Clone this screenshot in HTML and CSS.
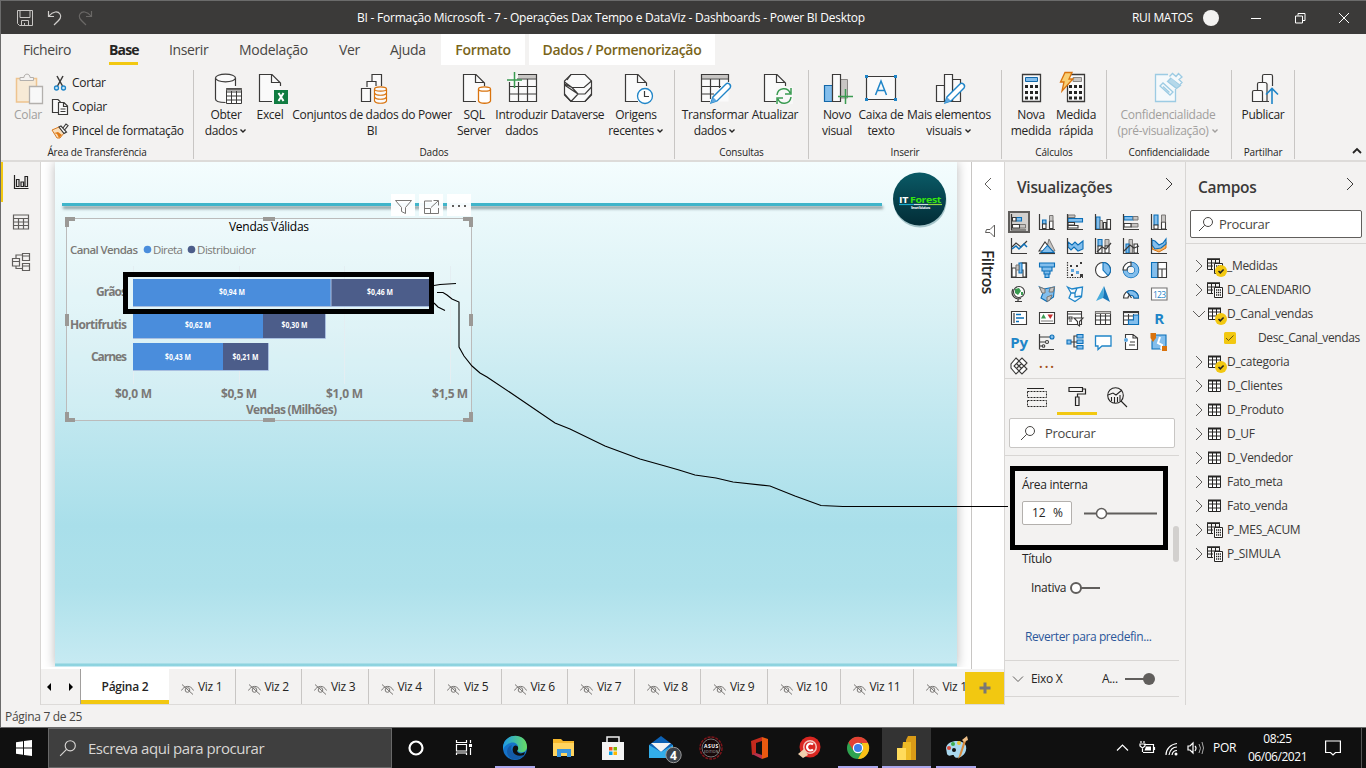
FILE: index.html
```html
<!DOCTYPE html>
<html lang="pt">
<head>
<meta charset="utf-8">
<title>Power BI Desktop</title>
<link rel="stylesheet" href="styles.css">
</head>
<body>
<svg class="defs" width="0" height="0">
  <symbol id="doc" viewBox="0 0 32 32"><path d="M3.5 2.500H16.500L24 10V29.500H3.500Z" fill="#fafafa"/><path d="M16 29.500H3.500V2.500H16L24.500 11V14M15.500 2.500V10.500H24" fill="none" stroke="#3b3a39" stroke-width="1.200"/></symbol>
  <symbol id="chev" viewBox="0 0 8 8"><path d="M1.500 2.500L4 5L6.500 2.500" fill="none" stroke="currentColor" stroke-width="1.400"/></symbol>
  <symbol id="right" viewBox="0 0 10 16"><path d="M2 2L8 8L2 14" fill="none" stroke="currentColor"/></symbol>
  <symbol id="mag" viewBox="0 0 16 16"><circle cx="10" cy="6" r="4.500" fill="none" stroke="currentColor"/><path d="M6.700 9.300L1 15" stroke="currentColor"/></symbol>
  <symbol id="tbl" viewBox="0 0 20 20"><path d="M3.500 4.500H15.500V15.500H3.500ZM3.500 8H15.500M3.500 12H15.500M7.500 5V15.500M11.500 5V15.500" fill="#fff" stroke="#252423"/><path d="M3 4.500H16" stroke="#252423" stroke-width="2"/></symbol>
  <symbol id="calc" viewBox="0 0 20 20"><path d="M2.500 3.500H14.500V7M2.500 3.500V13.500H8M2.500 7H14M2.500 10H8M6.500 4V13.500M10.500 4V7" fill="none" stroke="#252423"/><path d="M2 3H15" stroke="#252423" stroke-width="1.500"/><path d="M9.500 7.500H17.500V17.500H9.500Z" fill="#fff" stroke="#252423"/><path d="M11 10H16M11 12.500H16M11 15H16" stroke="#252423" stroke-width="1.300" stroke-dasharray="1.300 .7"/></symbol>
  <symbol id="ok" viewBox="0 0 12 12"><circle cx="6" cy="6" r="6" fill="#f2c811"/><path d="M3.500 6L5.300 7.800L8.600 4.500" fill="none" stroke="#252423" stroke-width="1.600"/></symbol>
  <symbol id="eye" viewBox="0 0 14 12"><path d="M.5 7.500C3 2.500 9.500 1.500 12.500 7.500M1 1.500L12 11.500" fill="none" stroke="#797775"/><circle cx="6.500" cy="7" r="2.300" fill="none" stroke="#797775"/></symbol>
</svg>

<div class="window">
  <header class="titlebar">
    <div class="quick">
      <svg width="16" height="16" viewBox="0 0 16 16" fill="none" stroke="#c8c6c4"><path d="M.5.500H15.500V15.500H2.500L.5 13.500ZM3 1V7.500H13V1M4.500 15V10.500H11.500V15M7.500 13V15"/></svg>
      <svg width="16" height="16" viewBox="0 0 16 16" fill="none" stroke="#d0cecc" stroke-width="1.200"><path d="M1.500 1V6.500H7M2 6C6 1 11 1 13 4C15 7 13.500 9 7 15"/></svg>
      <svg width="16" height="16" viewBox="0 0 16 16" fill="none" stroke="#6a6866" stroke-width="1.200"><path d="M14.500 1V6.500H9M14 6C10 1 5 1 3 4C1 7 2.500 9 9 15"/></svg>
    </div>
    <div class="title">BI - Formação Microsoft - 7 - Operações Dax Tempo e DataViz - Dashboards - Power BI Desktop</div>
    <div class="user">RUI MATOS</div>
    <span class="avatar"></span>
    <svg class="winctl" width="110" height="14" viewBox="0 0 110 14" fill="none" stroke="#fff"><path d="M2 7.500H12M46.500 5H53.500V12H46.500ZM49 4.500V2.500H56V9.500H54M90 2L100 12M100 2L90 12"/></svg>
  </header>

  <nav class="menu">
    <span class="m ficheiro">Ficheiro</span><span class="m base">Base</span><span class="m inserir">Inserir</span><span class="m model">Modelação</span><span class="m ver">Ver</span><span class="m ajuda">Ajuda</span><span class="m ctx fmt">Formato</span><span class="m ctx drill">Dados / Pormenorização</span>
  </nav>

  <section class="ribbon">
    <div class="group g-clip">
      <div class="items">
        <div class="rb colar off"><svg width="32" height="32" viewBox="0 0 32 32"><path d="M4.500 6.500H24.500V30H4.500Z" fill="#f7ead6" stroke="#eec48f" stroke-width="1.500"/><path d="M8 8.500V5.500H12C12 1 18 1 18 5.500H21.500V8.500Z" fill="#f3f2f1" stroke="#b3b0ad"/><path d="M17.500 14.500H30.500V31.500H17.500Z" fill="#f8f8f8" stroke="#b3b0ad" stroke-width="1.300"/></svg><span>Colar</span></div>
        <div class="cliplist">
          <div class="cl"><svg width="18" height="18" viewBox="0 0 18 18"><path d="M6 2L11.500 12M12 2L6.500 12" stroke="#3b3a39" stroke-width="1.500"/><circle cx="5.500" cy="14" r="2" fill="#c7e5f8" stroke="#1f85c8" stroke-width="1.300"/><circle cx="12.500" cy="14" r="2" fill="#c7e5f8" stroke="#1f85c8" stroke-width="1.300"/></svg>Cortar</div>
          <div class="cl"><svg width="18" height="18" viewBox="0 0 18 18" fill="#fafafa" stroke="#3b3a39" stroke-width="1.200"><path d="M7 14.500H1.500V1.500H7L9.500 4"/><path d="M7.500 4.500H13L16.500 8V16.500H7.500ZM12.500 4.500V8.500H16.500M9.500 11H14.500M9.500 13.500H14.500"/></svg>Copiar</div>
          <div class="cl"><svg width="18" height="18" viewBox="0 0 18 18"><path d="M1 8L8 5L13 11L9 16L6 16Z" fill="#f9dfbd" stroke="#d97a1f"/><path d="M3 11L6 12L8 16L11 13L7 10Z" fill="#e07b16"/><path d="M8 5L10 4L15.500 10L13 11.500ZM12 6L15 2L17 3.500L14 7.500" fill="#fff" stroke="#3b3a39" stroke-width="1.200"/></svg>Pincel de formatação</div>
        </div>
      </div>
      <div class="gl">Área de Transferência</div>
    </div>
    <div class="group g-data">
      <div class="items">
        <div class="rb w46"><svg width="32" height="32" viewBox="0 0 32 32"><path d="M5.500 6V27C5.500 29 9 30.500 16 30.500L26.500 26V6" fill="#fafafa"/><path d="M5.500 6V27C5.500 29 9 30.500 15.500 30.500M25.500 6V14" fill="none" stroke="#3b3a39" stroke-width="1.200"/><ellipse cx="15.500" cy="6" rx="10" ry="3.800" fill="#fafafa" stroke="#3b3a39" stroke-width="1.200"/><path d="M16.500 16.500H31.500V31.500H16.500ZM16.500 20H31.500M16.500 24H31.500M16.500 28H31.500M21.500 19V31M26.500 19V31" fill="#fff" stroke="#3b3a39"/><path d="M16 17.500H32" stroke="#696765" stroke-width="2"/></svg><span>Obter</span><span>dados<svg class="cv"><use href="#chev"/></svg></span></div>
        <div class="rb w42"><svg class="nudge" width="32" height="32" viewBox="0 0 32 32"><use href="#doc" width="32" height="32"/><path d="M18 18H32V32H18Z" fill="#107c41"/><path d="M22.500 21L27.500 29M27.500 21L22.500 29" stroke="#fff" stroke-width="2"/></svg><span>Excel</span></div>
        <div class="rb w162"><svg width="32" height="32" viewBox="0 0 32 32" fill="#fafafa" stroke="#3b3a39" stroke-width="1.200"><path d="M16 9V2.500H25.500V14M11 15V9.500H20V14M5.500 16.500H14.500V29.500H5.500Z"/><path d="M18.500 17V29C20 32 29 32 30.500 29V17M18.500 21C20 24 29 24 30.500 21M18.500 25C20 28 29 28 30.500 25" stroke="#d9730d"/><ellipse cx="24.500" cy="17" rx="6" ry="2.200" stroke="#d9730d"/></svg><span>Conjuntos de dados do Power</span><span>BI</span></div>
        <div class="rb w42"><svg class="nudge" width="32" height="32" viewBox="0 0 32 32"><use href="#doc" width="32" height="32"/><path d="M18.500 17V29C20 32 29 32 30.500 29V17" fill="#fff" stroke="#d9730d" stroke-width="1.300"/><ellipse cx="24.500" cy="17" rx="6" ry="2.200" fill="#fff" stroke="#d9730d" stroke-width="1.300"/></svg><span>SQL</span><span>Server</span></div>
        <div class="rb w53"><svg width="32" height="32" viewBox="0 0 32 32"><path d="M3.500 3.500H30.500V29.500H3.500Z" fill="#fafafa"/><path d="M12 2.500H30.500V6.500H12Z" fill="#c8c6c4"/><path d="M12 2.500H30.500V29.500H3.500V10M11 7H30M3.500 14.500H30M3.500 22H30M12.500 10V29M21.500 7V29" fill="none" stroke="#3b3a39" stroke-width="1.200"/><path d="M8.500 0V16M1 8H16" stroke="#3a9b51" stroke-width="1.500"/></svg><span>Introduzir</span><span>dados</span></div>
        <div class="rb w59"><svg width="32" height="32" viewBox="0 0 32 32" fill="#fafafa" stroke="#3b3a39" stroke-width="1.200"><path d="M9 2.500H23L29.500 9V23L23 29.500H9L2.500 23V9Z"/><path d="M2.500 10L10 15.500H22L29.500 9M9 2.500L5 8M10 15.500L2.500 12M10 15.500L16 22H23L29.500 15M16 22L9 29.500M16 22L2.500 13M9 29.500L2.500 22M9 29.500H23L29.500 22" fill="none"/></svg><span>Dataverse</span></div>
        <div class="rb w58"><svg class="nudge" width="32" height="32" viewBox="0 0 32 32"><use href="#doc" width="32" height="32"/><circle cx="23" cy="24" r="7.500" fill="#fff" stroke="#1f85c8" stroke-width="1.300"/><path d="M22.500 19V24.500H27" fill="none" stroke="#3b3a39" stroke-width="1.200"/></svg><span>Origens</span><span>recentes<svg class="cv"><use href="#chev"/></svg></span></div>
      </div>
      <div class="gl">Dados</div>
    </div>
    <div class="group g-query">
      <div class="items">
        <div class="rb w66"><svg width="32" height="32" viewBox="0 0 32 32"><path d="M2.500 2.500H29.500V29.500H2.500Z" fill="#fafafa"/><path d="M2.500 2.500H29.500V6.500H2.500Z" fill="#c8c6c4"/><path d="M29.500 10V2.500H2.500V29.500H11M2.500 7H29M2.500 14.500H22M2.500 22H15M11.500 7V27M20.500 7V16" fill="none" stroke="#3b3a39" stroke-width="1.200"/><path d="M12 31L14 25L27 12C29 10 33 13 31 16L18 29Z" fill="#fff" stroke="#1f85c8" stroke-width="1.400"/><path d="M12 31L14 25L18 29Z" fill="#5ea7df"/></svg><span>Transformar</span><span>dados<svg class="cv"><use href="#chev"/></svg></span></div>
        <div class="rb w54"><svg class="nudge" width="32" height="32" viewBox="0 0 32 32"><use href="#doc" width="32" height="32"/><path d="M15 15H32V32H15Z" fill="#f8f8f8"/><path d="M16 23C17 15 27 15 29 21M30 16V22H24M30 25C29 33 19 33 17 27M16 32V26H22" fill="none" stroke="#3a9b51" stroke-width="1.500"/></svg><span>Atualizar</span></div>
      </div>
      <div class="gl">Consultas</div>
    </div>
    <div class="group g-ins">
      <div class="items">
        <div class="rb w34"><svg width="32" height="32" viewBox="0 0 32 32"><path d="M3.500 13.500H11.500V29.500H3.500Z" fill="#83beec" stroke="#1267a8" stroke-width="1.200"/><path d="M19.500 7.500H26.500V26H19.500Z" fill="#c8c6c4" stroke="#8a8886"/><path d="M11.500 2.500H19.500V29.500H11.500Z" fill="#fafafa" stroke="#3b3a39" stroke-width="1.200"/><path d="M24.500 17V32M17 24.500H32" stroke="#3a9b51" stroke-width="1.500"/></svg><span>Novo</span><span>visual</span></div>
        <div class="rb w48 gap"><svg width="32" height="32" viewBox="0 0 32 32"><path d="M1.500 4.500H30.500V27.500H1.500Z" fill="#fafafa" stroke="#3b3a39" stroke-width="1.200"/><path d="M0 3H3V6H0ZM29 3H32V6H29ZM0 26H3V29H0ZM29 26H32V29H29Z" fill="#1f85c8"/><path d="M10.500 23L16 9L21.500 23M12.500 18.500H19.500" fill="none" stroke="#1f85c8" stroke-width="1.500"/></svg><span>Caixa de</span><span>texto</span></div>
        <div class="rb w88"><svg width="32" height="32" viewBox="0 0 32 32" fill="#fafafa" stroke="#3b3a39" stroke-width="1.200"><path d="M3.500 13.500H11.500V29.500H3.500ZM19.500 7.500H27.500V29.500H19.500Z"/><path d="M11.500 2.500H19.500V29.500H11.500Z"/><path d="M12 31L14 25L27 12C29 10 33 13 31 16L18 29Z" fill="#fff" stroke="#1f85c8" stroke-width="1.400"/><path d="M12 31L14 25L18 29Z" fill="#5ea7df" stroke="none"/></svg><span>Mais elementos</span><span>visuais<svg class="cv"><use href="#chev"/></svg></span></div>
      </div>
      <div class="gl">Inserir</div>
    </div>
    <div class="group g-calc">
      <div class="items">
        <div class="rb w44"><svg width="32" height="32" viewBox="0 0 32 32"><path d="M7.500 2.500H25.500V29.500H7.500Z" fill="#fafafa" stroke="#3b3a39" stroke-width="1.300"/><path d="M10.500 5.500H22.500V9.500H10.500Z" fill="#83beec" stroke="#1267a8"/><path d="M10 14.500H23M10 20.500H23M10 26H23" stroke="#252423" stroke-width="3" stroke-dasharray="3 2"/></svg><span>Nova</span><span>medida</span></div>
        <div class="rb w46"><svg width="32" height="32" viewBox="0 0 32 32"><path d="M7.500 2.500H24.500V29.500H7.500Z" fill="#fafafa" stroke="#3b3a39" stroke-width="1.300"/><path d="M13 5.500H21.500V9.500H13Z" fill="#c8c6c4" stroke="#8a8886"/><path d="M9 14.500H23M9 20.500H23M9 26H23" stroke="#252423" stroke-width="3" stroke-dasharray="3 2"/><path d="M5 .5H12L9 7H13L2 19L4 10H.500Z" fill="#f9cf73" stroke="#d9730d" stroke-width="1.300"/></svg><span>Medida</span><span>rápida</span></div>
      </div>
      <div class="gl">Cálculos</div>
    </div>
    <div class="group g-conf">
      <div class="items">
        <div class="rb w104 off"><svg width="32" height="32" viewBox="0 0 32 32" fill="#f5f9fb" stroke="#9ccbe3" stroke-width="1.300"><path d="M23.500 17V29.500H3.500V2.500H16"/><path d="M8 14L11 11L21 20L18 23ZM11 14.500L17.500 20.500"/><path d="M15.500 9.500L19.500 5.500L28.500 13.500L24.500 16.500Z" fill="#b5d8ea"/><path d="M17.500 4.500L20.500 1.500L24 4.500L26.500 1.500L30 5L27 7.500L30 10.500L28 12.500"/></svg><span>Confidencialidade</span><span>(pré-visualização) <svg class="cv"><use href="#chev"/></svg></span></div>
      </div>
      <div class="gl">Confidencialidade</div>
    </div>
    <div class="group g-pub">
      <div class="items">
        <div class="rb w54"><svg width="32" height="32" viewBox="0 0 32 32" fill="#fafafa" stroke="#3b3a39" stroke-width="1.200"><path d="M15.500 10V4Q15.500 2.500 17 2.500H24Q25.500 2.500 25.500 4V14M10.500 18V12Q10.500 10.500 12 10.500H18Q19.500 10.500 20 12V29.500M5.500 29.500V20Q5.500 18.500 7 18.500H14Q15.500 18.500 15.500 20V29.500ZM15.500 29.500H22"/><path d="M25 32V17M19 22.500L25 16.500L31 22.500" fill="none" stroke="#1f85c8" stroke-width="1.600"/></svg><span>Publicar</span></div>
      </div>
      <div class="gl">Partilhar</div>
    </div>
    <svg class="fold" width="10" height="8" viewBox="0 0 10 8"><path d="M1 6L5 2L9 6" fill="none" stroke="#252423" stroke-width="1.800"/></svg>
  </section>

  <main class="work">
    <aside class="rail">
      <div class="on"><svg width="18" height="18" viewBox="0 0 18 18" fill="none" stroke="#252423" stroke-width="1.200"><path d="M2.500 2V15.500H16.500M4.500 6.500H7V13.500H4.500ZM9 9H11.500V13.500H9ZM13 3.500H15.500V13.500H13Z"/></svg></div>
      <div><svg width="18" height="18" viewBox="0 0 18 18" fill="none" stroke="#605e5c" stroke-width="1.200"><path d="M1.500 2H16.500V16H1.500ZM1.500 5.500H16.500M1.500 9H16.500M1.500 12.500H16.500M6.500 5V16M11.500 5V16"/></svg></div>
      <div><svg width="20" height="20" viewBox="0 0 20 20" fill="none" stroke="#605e5c" stroke-width="1.200"><path d="M1.500 6.500H8.500V14H1.500ZM1.500 9.500H8.500M11.500 1.500H18.500V8.500H11.500ZM11.500 4H18.500M11.500 11.500H18.500V18.500H11.500ZM11.500 14H18.500M5 6V3H11M5 14V16.500H11"/></svg></div>
    </aside>

    <div class="center">
      <div class="upper">
        <div class="stage">
          <div class="page">
            <div class="rule"></div>
            <svg class="logo" width="60" height="60" viewBox="0 0 60 60"><defs><linearGradient id="lg" x2="0" y2="1"><stop offset="0" stop-color="#0a5a66"/><stop offset="1" stop-color="#022c36"/></linearGradient></defs><circle cx="30" cy="31" r="26.500" fill="#5f8f98" opacity=".5"/><circle cx="29.500" cy="29" r="26.500" fill="url(#lg)"/><text x="9" y="33" font-size="9.500" font-weight="700" fill="#fff" textLength="9" lengthAdjust="spacingAndGlyphs">IT</text><text x="20" y="33" font-size="9.500" font-weight="700" fill="#35e80e" textLength="31" lengthAdjust="spacingAndGlyphs">Forest</text><path d="M9 34.500H24" stroke="#19aacb" stroke-width="1.200"/><path d="M24 34.500H38" stroke="#ccdfe0" stroke-width="1.200"/><path d="M38 34.500H52" stroke="#8ed63c" stroke-width="1.200"/><text x="21" y="38.500" font-size="3" font-weight="700" fill="#fff" textLength="19" lengthAdjust="spacingAndGlyphs">Smart Solutions</text></svg>
            <svg class="visual" width="418" height="232" viewBox="60 192 418 232">
              <path d="M66.500 218.500H471.500V420.500H66.500Z" fill="#fff" fill-opacity=".22" stroke="#bbb"/>
              <path d="M133.500 266V384M239.500 266V384M344.500 266V384M450.500 266V384" stroke="#e4eef2"/>
              <g class="ax">
                <text x="229" y="231" textLength="80" class="reg">Vendas Válidas</text>
                <text x="70" y="254" textLength="68" class="leg">Canal Vendas</text>
                <text x="153" y="254" textLength="30" class="leg reg2">Direta</text>
                <text x="197" y="254" textLength="59" class="leg reg2">Distribuidor</text>
                <text x="96" y="296" textLength="31">Grãos</text>
                <text x="70" y="329" textLength="57">Hortifrutis</text>
                <text x="91" y="361" textLength="36">Carnes</text>
                <text x="115" y="398" textLength="37">$0,0 M</text><text x="221" y="398" textLength="36">$0,5 M</text><text x="326" y="398" textLength="37">$1,0 M</text><text x="432" y="398" textLength="36">$1,5 M</text>
                <text x="246" y="414" textLength="91">Vendas (Milhões)</text>
              </g>
              <circle cx="147.500" cy="249.500" r="3.800" fill="#4a8ddc"/><circle cx="191.500" cy="249.500" r="3.800" fill="#4c5d8a"/>
              <path d="M133 279H331V306H133ZM133 311H263V338H133ZM133 343H223V370H133Z" fill="#4a8ddc"/>
              <path d="M331 279H429V306H331ZM263 311H325.500V338H263ZM223 343H268V370H223Z" fill="#4c5d8a"/>
              <path d="M133 306.500H429M133 338.500H325.500V311M133 370.500H268.500V343M331 279V306" fill="none" stroke="#a9bfe0"/>
              <g class="dl"><text x="219" y="295" textLength="26" lengthAdjust="spacingAndGlyphs">$0,94 M</text><text x="367" y="295" textLength="26" lengthAdjust="spacingAndGlyphs">$0,46 M</text><text x="185" y="328" textLength="26" lengthAdjust="spacingAndGlyphs">$0,62 M</text><text x="281.500" y="328" textLength="26" lengthAdjust="spacingAndGlyphs">$0,30 M</text><text x="165" y="360" textLength="26" lengthAdjust="spacingAndGlyphs">$0,43 M</text><text x="232.500" y="360" textLength="26" lengthAdjust="spacingAndGlyphs">$0,21 M</text></g>
              <path d="M65 217H75V221H69V227H65ZM463 217H473V227H469V221H463ZM65 412H69V418H75V422H65ZM469 412H473V422H463V418H469ZM263 217H275V221H263ZM263 418H275V422H263ZM65 314H69V326H65ZM469 314H473V326H469Z" fill="#9b9996"/>
              <path d="M391 194H415V216H391ZM419 194H443V216H419ZM447 194H471V216H447Z" fill="#fff" fill-opacity=".95"/>
              <path d="M395.500 200.500H411.500L405.500 207.500V213.500L401.500 211.500V207.500ZM432 201H424.500V213.500H438.500V208M424.500 208.500H430.500V213.500M431 207.500L438 201M433.500 200.500H438.500V205.500" fill="none" stroke="#797775"/>
              <path d="M452 206H454M458 206H460M464 206H466" stroke="#605e5c" stroke-width="2"/>
            </svg>
          </div>
        </div>
        <div class="filters"><svg width="10" height="14" viewBox="0 0 10 14"><path d="M8 1L2 7L8 13" fill="none" stroke="#605e5c"/></svg><svg class="fun" width="12" height="14" viewBox="0 0 12 14"><path d="M10.500 1V13L6 8.500H1.500L2.500 5.500H6Z" fill="none" stroke="#605e5c"/></svg><span>Filtros</span></div>
      </div>
      <div class="tabs">
        <div class="arrows"><svg width="26" height="8" viewBox="0 0 26 8"><path d="M5 0L1 4L5 8ZM23 0L27 4L23 8Z"/></svg></div>
        <div class="tab cur">Página 2</div>
        <div class="tab"><svg><use href="#eye"/></svg>Viz 1</div><div class="tab"><svg><use href="#eye"/></svg>Viz 2</div><div class="tab"><svg><use href="#eye"/></svg>Viz 3</div><div class="tab"><svg><use href="#eye"/></svg>Viz 4</div><div class="tab"><svg><use href="#eye"/></svg>Viz 5</div><div class="tab"><svg><use href="#eye"/></svg>Viz 6</div><div class="tab"><svg><use href="#eye"/></svg>Viz 7</div><div class="tab"><svg><use href="#eye"/></svg>Viz 8</div><div class="tab"><svg><use href="#eye"/></svg>Viz 9</div><div class="tab wide"><svg><use href="#eye"/></svg>Viz 10</div><div class="tab wide"><svg><use href="#eye"/></svg>Viz 11</div>
        <div class="tab cut"><svg><use href="#eye"/></svg>Viz 12</div>
        <div class="plus"><svg width="12" height="12"><path d="M6 .5V11.500M.5 6H11.500" stroke="#797775" stroke-width="3"/></svg></div>
      </div>
    </div>

    <aside class="viz">
      <div class="ph"><b>Visualizações</b><svg width="10" height="16"><use href="#right"/></svg></div>
      <div class="vgrid">
        <i class="sel"><svg viewBox="0 0 18 18"><path class="g" d="M3 11.500H15.500V15H3Z"/><path class="b" d="M6 4.500H11.500V8H6Z"/><path class="w" d="M2.500 4.500H6V8H2.500ZM2.500 11.500H9.500V15H2.500Z"/><path class="k" d="M1.500 1V17H16"/></svg></i>
        <i><svg viewBox="0 0 18 18"><path class="b" d="M4.500 7H8V11H4.500Z"/><path class="w" d="M4.500 11H8V15.500H4.500ZM11.500 8H15V15.500H11.500Z"/><path class="g" d="M11.500 2.500H15V8H11.500Z"/><path class="k" d="M1.500 1V16.500H17"/></svg></i>
        <i><svg viewBox="0 0 18 18"><path class="g" d="M2 2H9V4.500H2Z"/><path class="b" d="M2 5.500H16.500V9H2Z"/><path class="w" d="M2 9.500H8.500V12H2ZM2 12.500H12V15H2Z"/><path class="k" d="M1.500 1V16.500H17"/></svg></i>
        <i><svg viewBox="0 0 18 18"><path class="b" d="M2 4H6V16H2Z"/><path class="g" d="M6 7.500H8.500V16H6Z"/><path class="w" d="M9.500 9.500H12V16H9.500ZM13 6.500H16.500V16H13Z"/><path class="k" d="M1.500 1V16.500H17"/></svg></i>
        <i><svg viewBox="0 0 18 18"><path class="b" d="M2 3.500H11V7H2Z"/><path class="g" d="M11 3.500H16V7H11ZM9 10.500H16V14H9Z"/><path class="w" d="M2 10.500H9V14H2Z"/><path class="k" d="M1.500 1V16.500H17"/></svg></i>
        <i><svg viewBox="0 0 18 18"><path class="b" d="M4 2H8V12H4Z"/><path class="w" d="M4 12H8V16H4ZM11.500 9H15.500V16H11.500Z"/><path class="g" d="M11.500 2H15.500V9H11.500Z"/><path class="k" d="M1.500 1V16.500H17"/></svg></i>

        <i><svg viewBox="0 0 18 18"><path class="k" d="M1.500 1V16.500H17M2 10L6 6L11 10L17 4"/><path class="bl" d="M2 12L6 9L9 12L14 7L17 10"/></svg></i>
        <i><svg viewBox="0 0 18 18"><path class="g" d="M11 2L17 14H8Z"/><path class="w" d="M1 14L7 5L14 14Z"/><path class="b" d="M3 15.500L9.500 8.500L16 15.500Z"/><path class="k" d="M1 16.500H17"/></svg></i>
        <i><svg viewBox="0 0 18 18"><path class="b" d="M2 5L6 8L9 5L12 8L17 4V12L12 14L8 10L5 13L2 10Z"/><path class="k" d="M1.500 1V16.500H17"/></svg></i>
        <i><svg viewBox="0 0 18 18"><path class="b" d="M4 2.500H8V9H4Z"/><path class="g" d="M11 2.500H15V9H11Z"/><path class="w" d="M4 9H8V16H4ZM11 9H15V16H11Z"/><path class="k" d="M1.500 1V16.500H17M3 15L8 10L12 12L17 6"/></svg></i>
        <i><svg viewBox="0 0 18 18"><path class="g" d="M7 2.500H10.500V16H7Z"/><path class="b" d="M4 7H7V16H4Z"/><path class="w" d="M12 7H15.500V16H12Z"/><path class="k" d="M1.500 1V16.500H17M2 14L8 8L12 11L17 9"/></svg></i>
        <i><svg viewBox="0 0 18 18"><path class="or" d="M2 4L7 12L16 5V11L9 15L2 12Z"/><path class="b" d="M2 3L5 4L9 8L13 6L16 2V7L11 11L5 12L2 8Z"/><path class="k" d="M1.500 1V16.500H17"/></svg></i>

        <i><svg viewBox="0 0 18 18"><path class="w" d="M2 7H6V16H2ZM11 2H16V16H13V9H11Z"/><path class="b" d="M9 2H12V12H9Z"/><path class="g" d="M6 4H9V9H6Z"/><path class="k" d="M1.500 2V16.500H16.500V2H12"/></svg></i>
        <i><svg viewBox="0 0 18 18"><path class="b" d="M1.500 2H16.500V6H1.500ZM4 6H14V10H4ZM6 10H12V13H6ZM7 13H11V16.500H7Z"/></svg></i>
        <i><svg viewBox="0 0 18 18"><path class="k" d="M1.500 1V16.500H17" stroke-dasharray="1.500 1"/><path d="M5 8h3v3h-3zM10 10h3v3h-3z" fill="#5ea7df"/><path d="M4 4h2v2h-2zM10 4h2v2h-2zM14 1h2v2h-2zM14 13h3v3h-3zM5 13h2v2h-2z" fill="#3b3a39"/></svg></i>
        <i><svg viewBox="0 0 18 18"><circle class="w" cx="9" cy="9" r="7.500"/><path class="b" d="M9 1.500A7.500 7.500 0 0 1 14 14.500L9 9Z"/></svg></i>
        <i><svg viewBox="0 0 18 18"><circle cx="9" cy="9" r="5.800" fill="none" stroke="#0b6fb8" stroke-width="5"/><circle cx="9" cy="9" r="5.800" fill="none" stroke="#83beec" stroke-width="3.500"/><path class="w" d="M9 1A8 8 0 0 0 1 9H5A4 4 0 0 1 9 5Z"/></svg></i>
        <i><svg viewBox="0 0 18 18"><path class="b" d="M1.500 1.500H8V16.500H1.500Z"/><path class="w" d="M8 1.500H16.500V8H8ZM8 8H16.500V16.500H8ZM12 8V16"/></svg></i>

        <i><svg viewBox="0 0 18 18"><circle class="w" cx="9" cy="7" r="5.500"/><path d="M5 4L9 3L11 6L8 10L5 8ZM11 7H13V10H11Z" fill="#3a9b51"/><path class="k" d="M3 4C0 10 5 15 11 13.500M8 14V16.500M5 16.500H12"/></svg></i>
        <i><svg viewBox="0 0 18 18"><path class="b" d="M1.500 2L6 4L11 3L16.500 2L15.500 12L9 16.500L3 13L5 8Z"/><path class="g" d="M1.500 2L7 4V8L4 8ZM12 3L16.500 2L15 7L11 7ZM9 12L14 10L12 15L9 16.500Z"/></svg></i>
        <i><svg viewBox="0 0 18 18"><path d="M1.500 2L6 4L11 3L16.500 2L15.500 12L9 16.500L3 13L5 8ZM5 8H9L11 3M9 8V12L15.500 11" fill="#f5fbff" stroke="#1f85c8" stroke-width="1.300"/></svg></i>
        <i><svg viewBox="0 0 18 18"><path d="M10 1L16 17L9 13Z" fill="#1876b8"/><path d="M10 1L2 16L9 13Z" fill="#48acdd"/></svg></i>
        <i><svg viewBox="0 0 18 18"><path class="w" d="M1.500 13A7.500 7.500 0 0 1 16.500 13H12A3 3 0 0 0 6 13Z"/><path class="b" d="M5 6.800A7.500 7.500 0 0 1 16.500 13H12A3 3 0 0 0 8 10.500Z"/><path class="k" d="M6 8L9.500 13"/></svg></i>
        <i><svg viewBox="0 0 18 18"><path d="M1.500 3H17V15H1.500Z" class="w" stroke-opacity=".7"/><text x="3" y="12.500" font-size="8.500" fill="#1f85c8" textLength="13">123</text></svg></i>

        <i><svg viewBox="0 0 18 18"><path class="w" d="M1.500 2.500H16.500V15.500H1.500Z"/><path class="bl" d="M6 5.500H11M6 9H14M6 12.500H9"/><path class="k" d="M4 4V14"/></svg></i>
        <i><svg viewBox="0 0 18 18"><path class="w" d="M1.500 3.500H16.500V14.500H1.500Z"/><path d="M3 9.500L5.500 5L8 9.500Z" fill="#3a9b51"/><path d="M9.500 5.500H15L12.300 10Z" fill="#c62f2f"/><path class="g" d="M3 12H15"/></svg></i>
        <i><svg viewBox="0 0 18 18"><path class="w" d="M1.500 2.500H15.500V15.500H1.500ZM1.500 5H15M3 8H6V10H3ZM3 12H6"/><path class="w" d="M8 9H17L13.500 12.500V17L11.500 15.500V12.500Z"/></svg></i>
        <i><svg viewBox="0 0 18 18"><path class="w" d="M1.500 2.500H16.500V15.500H1.500ZM1.500 7H16.500M1.500 11H16.500M6.500 5V15M11.500 5V15"/><path class="g" d="M1.500 2.500H16.500V4.500H1.500Z"/></svg></i>
        <i><svg viewBox="0 0 18 18"><path class="w" d="M1.500 2.500H16.500V15.500H1.500ZM1.500 7H16.500M1.500 11H16.500M6.500 5V15M11.500 5V15"/><path class="b" d="M11.500 6H16.500V15.500H6.500V11H11.500Z"/><path class="k" d="M1.500 3.500H16.500"/></svg></i>
        <i class="letter">R</i>

        <i class="letter">Py</i>
        <i><svg viewBox="0 0 18 18"><path class="k" d="M1.500 1V16.500M2 4H13M2 9H7M2 13H4M2 16.500H16"/><circle class="b" cx="14" cy="4" r="2"/><circle class="w" cx="9" cy="9" r="1.500"/><circle class="w" cx="5.500" cy="13" r="1.300"/></svg></i>
        <i><svg viewBox="0 0 18 18"><path class="b" d="M1 7H5V11H1ZM11 1.500H17V5H11ZM11 7H17V10.500H11ZM11 12.500H17V16H11Z"/><path class="k" d="M5 9H11M11 3H8V14H11"/></svg></i>
        <i><svg viewBox="0 0 18 18"><path d="M1.500 3H17V13H8L4 16.500V13H1.500Z" fill="#fff" stroke="#1f85c8" stroke-width="1.300"/></svg></i>
        <i><svg viewBox="0 0 18 18"><path class="w" d="M3.500 9V16.500H15.500V5L11 1.500H3.500V5M11 1.500V5H15.500M8 9H13M7 12H13"/><circle cx="4" cy="7" r="2" fill="#5ea7df"/></svg></i>
        <i><svg viewBox="0 0 18 18"><path class="b" d="M4 2H16V14L10 16H2V8Z"/><path d="M10 4L8 10L12 12L11 16" stroke="#fff" stroke-width="2" fill="none"/><path d="M.5 0H6V5L3 9L.500 5ZM12 13H17V18H12Z" fill="#d9730d"/></svg></i>

        <i><svg viewBox="0 0 18 18" class="big"><path class="w" d="M6 1L9 4L12 1L17 6L14 9L17 12L12 17L9 14L6 17L1 11V7ZM9 4L4 9L9 14L14 9ZM6.500 6.500L11.500 11.500M11.500 6.500L6.500 11.500"/></svg></i>
        <i class="dots">···</i>
      </div>
      <div class="vtabs">
        <span><svg width="20" height="20" viewBox="0 0 20 20" fill="none" stroke="#252423"><path d="M0 1.500H17"/><path d="M.5 4.500H19.500V10.500H.5ZM.5 13.500H19.500V19.500H.5Z" stroke-dasharray="2 1"/></svg></span>
        <span class="act"><svg width="20" height="20" viewBox="0 0 20 20" fill="none" stroke="#252423" stroke-width="1.200"><path d="M2 1.500H15.500V5.500H2ZM15.500 3H18.500V8H10.500V11M8.500 11H12V19.500H8.500Z"/></svg></span>
        <span><svg width="20" height="20" viewBox="0 0 20 20" fill="none" stroke="#252423" stroke-width="1.100"><circle cx="8.500" cy="8.500" r="7.800"/><path d="M14 14L20 20M1 8L6 6L9 8L15 3M4.500 10V14M7.500 10V16M10.500 10V15M13 8V14"/></svg></span>
      </div>
      <div class="search vs"><svg><use href="#mag"/></svg>Procurar</div>
      <div class="fmtbody">
        <div class="thumb"></div>
        <div class="sec">
          <div class="lbl">Área interna</div>
          <div class="row"><div class="pct"><span>12</span><span>%</span></div><svg width="74" height="14"><path d="M0 7.500H73" stroke="#605e5c" stroke-width="2"/><circle cx="17.500" cy="7.500" r="5" fill="#fff" stroke="#605e5c" stroke-width="1.500"/></svg></div>
          <div class="lbl t">Título</div>
          <div class="row tog"><span>Inativa</span><svg width="31" height="14"><path d="M6 7H30" stroke="#605e5c" stroke-width="2"/><circle cx="6" cy="7" r="5" fill="#fff" stroke="#605e5c" stroke-width="2"/></svg></div>
          <div class="rev">Reverter para predefin...</div>
        </div>
        <div class="axis"><svg width="12" height="8" viewBox="0 0 12 8"><path d="M1 1.500L6 6.500L11 1.500" fill="none" stroke="#605e5c"/></svg><span class="ex">Eixo X</span><span class="aa">A...</span><svg width="31" height="14"><path d="M0 7H20" stroke="#605e5c" stroke-width="2"/><circle cx="24" cy="7" r="6" fill="#605e5c"/></svg></div>
      </div>
    </aside>

    <aside class="fields">
      <div class="ph"><b>Campos</b><svg width="10" height="16"><use href="#right"/></svg></div>
      <div class="search fs"><svg><use href="#mag"/></svg>Procurar</div>
      <div class="list">
        <div class="f"><svg class="ar"><use href="#right"/></svg><span class="ic"><svg><use href="#calc"/></svg><svg class="okb"><use href="#ok"/></svg></span>_Medidas</div>
        <div class="f"><svg class="ar"><use href="#right"/></svg><span class="ic"><svg><use href="#calc"/></svg></span>D_CALENDARIO</div>
        <div class="f"><svg class="ar down"><use href="#right"/></svg><span class="ic"><svg><use href="#tbl"/></svg><svg class="okb"><use href="#ok"/></svg></span>D_Canal_vendas</div>
        <div class="f child"><svg width="12" height="12" viewBox="0 0 12 12"><rect width="12" height="12" rx="1.500" fill="#f2c811"/><path d="M2 6L4.500 8.500L9.500 3.500" fill="none" stroke="#6b5a10"/></svg>Desc_Canal_vendas</div>
        <div class="f"><svg class="ar"><use href="#right"/></svg><span class="ic"><svg><use href="#tbl"/></svg><svg class="okb"><use href="#ok"/></svg></span>D_categoria</div>
        <div class="f"><svg class="ar"><use href="#right"/></svg><span class="ic"><svg><use href="#tbl"/></svg></span>D_Clientes</div>
        <div class="f"><svg class="ar"><use href="#right"/></svg><span class="ic"><svg><use href="#tbl"/></svg></span>D_Produto</div>
        <div class="f"><svg class="ar"><use href="#right"/></svg><span class="ic"><svg><use href="#tbl"/></svg></span>D_UF</div>
        <div class="f"><svg class="ar"><use href="#right"/></svg><span class="ic"><svg><use href="#tbl"/></svg></span>D_Vendedor</div>
        <div class="f"><svg class="ar"><use href="#right"/></svg><span class="ic"><svg><use href="#tbl"/></svg></span>Fato_meta</div>
        <div class="f"><svg class="ar"><use href="#right"/></svg><span class="ic"><svg><use href="#tbl"/></svg></span>Fato_venda</div>
        <div class="f"><svg class="ar"><use href="#right"/></svg><span class="ic"><svg><use href="#calc"/></svg></span>P_MES_ACUM</div>
        <div class="f"><svg class="ar"><use href="#right"/></svg><span class="ic"><svg><use href="#calc"/></svg></span>P_SIMULA</div>
      </div>
    </aside>
  </main>
  <footer class="status">Página 7 de 25</footer>
</div>

<footer class="taskbar">
  <div class="start"><svg width="16" height="16"><path d="M0 2.200L7 1.200V7.500H0ZM8 1L16 0V7.500H8ZM0 8.500H7V14.800L0 13.800ZM8 8.500H16V16L8 15Z" fill="#fff"/></svg></div>
  <div class="tsearch"><svg width="18" height="18" viewBox="0 0 16 16"><use href="#mag"/></svg>Escreva aqui para procurar</div>
  <div class="t cort"><svg width="18" height="18"><circle cx="9" cy="9" r="6.500" fill="none" stroke="#fff" stroke-width="2.200"/></svg></div>
  <div class="t ntv"><svg width="18" height="18" fill="none" stroke="#fff" stroke-width="1.200"><path d="M1.500 1V3.500H11.500V1M1.500 5.500H11.500V12H1.500ZM1.500 16V14H11.500V16M15.500 1V4M15.500 9V16"/><path d="M14 5H17V8H14Z" fill="#fff" stroke="none"/></svg></div>
  <div class="t run"><svg width="24" height="24" viewBox="0 0 24 24"><defs><linearGradient id="e1"><stop stop-color="#1d9ae8"/><stop offset="1" stop-color="#67dc62"/></linearGradient></defs><circle cx="12" cy="12" r="12" fill="#1573c9"/><path d="M0 12C0-4 24-4 24 11C24 17 16 18 14 14C18 8 10 4 5 8Q1 10 0 14Z" fill="url(#e1)"/><path d="M9 9C6 15 11 20 21 19C16 26 4 25 4 15Q5 10 9 9Z" fill="#145ba8"/><path d="M11 10C14 8 17 12 14 15C15 18 19 18 22 16L21 19C12 22 7 15 11 10Z" fill="#101010"/></svg></div>
  <div class="t"><svg width="24" height="24" viewBox="0 0 24 24"><path d="M1 3H9L11 5H22V20H1Z" fill="#f5b72c"/><path d="M1 7H22V20H1Z" fill="#ffd45f"/><path d="M5 13H19V21H15V17H9V21H5Z" fill="#3994dc"/></svg></div>
  <div class="t"><svg width="24" height="24" viewBox="0 0 24 24"><path d="M6 7V1H18V7" fill="none" stroke="#eee" stroke-width="1.500"/><path d="M1 6H23V24H1Z" fill="#f4f4f4"/><path d="M8 11H11.500V14.500H8Z" fill="#f25022"/><path d="M12.500 11H16V14.500H12.500Z" fill="#7fba00"/><path d="M8 15.500H11.500V19H8Z" fill="#00a4ef"/><path d="M12.500 15.500H16V19H12.500Z" fill="#ffb900"/></svg></div>
  <div class="t mail"><svg width="34" height="30" viewBox="0 0 34 30"><path d="M0 12L12 3L24 12V25H0Z" fill="#0d62b5"/><path d="M2 10H22L12 19Z" fill="#f4f4f4"/><path d="M0 12L12 19L24 12V25H0Z" fill="#33aeea"/><circle cx="24.500" cy="22" r="7.700" fill="#3a4048" stroke="#999"/><text x="21" y="26.500" fill="#fff" font-size="12" font-weight="700">4</text></svg></div>
  <div class="t"><svg width="24" height="24" viewBox="0 0 24 24"><circle cx="12" cy="12" r="11" fill="#17090a" stroke="#7b151a" stroke-width="1.500" stroke-dasharray="3 1"/><circle cx="12" cy="12" r="9" fill="none" stroke="#777"/><text x="5" y="12" font-size="5" font-weight="700" fill="#fff" textLength="14">ASUS</text><text x="5" y="16.500" font-size="3.500" fill="#bbb" textLength="14">EDITION</text></svg></div>
  <div class="t"><svg width="24" height="24" viewBox="0 0 24 24"><path d="M3 5L14 1V5L8 7V17L4 19Z" fill="#c42a1d"/><path d="M14 1L20 3V21L14 23Z" fill="#e95910"/><path d="M4 18L8 17L14 19V23Z" fill="#b8324e"/></svg></div>
  <div class="t"><svg width="24" height="24" viewBox="0 0 24 24"><circle cx="13" cy="11" r="10.500" fill="#d92621"/><circle cx="13" cy="11" r="7" fill="#f4c8c0"/><circle cx="13" cy="11" r="5.500" fill="#d92621"/><path d="M16 8.500A3.500 3.500 0 1 0 16 13.500" fill="none" stroke="#fff" stroke-width="2.200"/><path d="M1 18L7 13L11 19L6 22Z" fill="#f2d0ad"/></svg></div>
  <div class="t run"><svg width="24" height="24" viewBox="0 0 24 24"><circle cx="12" cy="12" r="11" fill="#2fa350"/><path d="M2.500 6.500A11 11 0 0 1 22 7H12L7 14Z" fill="#e34133"/><path d="M22 7A11 11 0 0 1 12 23L17 14L16 7Z" fill="#fbc116"/><circle cx="12" cy="12" r="5.200" fill="#fff"/><circle cx="12" cy="12" r="4" fill="#3f7ee8"/></svg></div>
  <div class="t run pbi"><svg width="24" height="24" viewBox="0 0 24 24"><path d="M13 0H21V24H11V4Z" fill="#d99b17"/><path d="M8 6H16V24H6Z" fill="#eebb26"/><path d="M2 12H11V24H2Z" fill="#ffdb5b"/></svg></div>
  <div class="t run"><svg width="24" height="24" viewBox="0 0 24 24"><path d="M2 12C3 4 19 2 22 10C24 19 13 25 10 20C10 17 5 22 3 18Z" fill="#a9d8ef"/><circle cx="5" cy="12" r="2" fill="#d94839"/><circle cx="9" cy="8" r="2" fill="#3cad50"/><circle cx="15" cy="7" r="2" fill="#eac034"/><circle cx="10" cy="14" r="2" fill="#101010"/><path d="M20 4L14 23L17 20L22 5Z" fill="#d68a3d"/><path d="M18 4L23 0L24 4L20 6Z" fill="#efc089"/></svg></div>
  <div class="tray">
    <svg width="82" height="18" viewBox="0 0 82 18" fill="none" stroke="#fff" stroke-width="1.200"><path d="M1 11.500L6.500 6L12 11.500M28 5.500H37.500V13.500H27M38.500 8V11M25 2V4M28 2V4M24 5H29V7L26.500 9L24 7ZM26.500 9V13"/><path d="M30 7.500H35V11.500H28.500Z" fill="#fff" stroke="none"/><path d="M50 16C50 10 55 5 61 4.500M53 16C54 11 57 8 61 8M56 16C56.500 13 59 11.500 61 11.500M72 7H74L77 4V14L74 11H72Z"/><circle cx="60" cy="15" r="1.500" fill="#fff" stroke="none"/><path d="M79 7Q81 9 79 12"/></svg>
    <svg class="snd" width="6" height="18" viewBox="0 0 6 18" fill="none" stroke="#aaa"><path d="M0 5Q3 9 0 14M3 3Q6 9 3 15"/></svg>
    <span class="por">POR</span>
    <span class="clock"><span>08:25</span><span>06/06/2021</span></span>
    <svg width="16" height="16" fill="none" stroke="#fff" stroke-width="1.200"><path d="M.6 1H15.400V12.500H10.500L8 15L5.500 12.500H.600Z"/></svg>
    <span class="peek"></span>
  </div>
</footer>

<svg class="marks" width="1366" height="768" fill="none" stroke="#000">
  <path d="M125.500 274.500H431.500V311.500H125.500ZM1012.500 468.500H1165.500V547.500H1012.500Z" stroke-width="5"/>
  <path d="M434 285.500L440 284.500L456 283.500M434 303L438 307L445 310.500M437 292.500H443L447 295L452 299L459 302V347L464 356L472 366L480 373L487 377L511 393L555 423L570 429L605 446L640 459L665 466L679 470L695 475L716 478L733 482L770 486L795 496L821 505.500L843 506.500H1008" stroke-width="1.100"/>
</svg>
</body>
</html>
```
FILE: styles.css
```css
* { box-sizing: border-box; }
body { margin: 0; width: 1366px; height: 768px; overflow: hidden; position: relative; background: #101010; color: #252423; font: 12px/16px "Open Sans", "Noto Sans", sans-serif; letter-spacing: -.026em; }
svg { display: block; flex: none; overflow: visible; }
.defs { position: absolute; }
.window { height: 728px; border: 1px solid #6b6b6b; border-right: 0; background: #f3f2f1; display: flex; flex-direction: column; }

.titlebar { height: 33px; flex: none; background: #3b3a39; color: #fff; display: flex; align-items: center; padding-top: 1px; white-space: nowrap; }
.quick { display: flex; gap: 14px; padding-left: 16px; width: 356px; align-items: center; }
.title { width: 775px; letter-spacing: -.235px; }
.user { width: 71px; }
.avatar { width: 16px; height: 16px; border-radius: 50%; background: #f3f2f1; }
.winctl { margin-left: 30px; }

.menu { height: 31px; flex: none; display: flex; font-size: 14px; line-height: 32px; color: #484644; white-space: nowrap; }
.m { flex: none; }
.ficheiro { padding-left: 22px; width: 108px; letter-spacing: -.45px; }
.base { width: 29px; margin-right: 31px; font-weight: 700; color: #252423; box-shadow: inset 0 -3px #f2c811; letter-spacing: -.06em; }
.inserir { width: 70px; letter-spacing: -.4px; }
.model { width: 100px; }
.ver { width: 51px; }
.ajuda { width: 51px; }
.ctx { background: #fff; color: #7a651a; font-weight: 600; text-align: center; }
.fmt { width: 84px; margin-right: 4px; }
.drill { width: 186px; }

.ribbon { height: 97px; flex: none; display: flex; padding-top: 5px; border-bottom: 2px solid #dddbd9; position: relative; }
.group { border-right: 1px solid #c8c6c4; height: 89px; display: flex; flex-direction: column; flex: none; }
.items { display: flex; height: 77px; }
.gl { font-size: 10px; line-height: 14px; text-align: center; white-space: nowrap; letter-spacing: -.15px; }
.g-clip { width: 193px; }
.g-data { width: 481px; }
.g-data .items { padding-left: 9px; }
.g-query { width: 134px; }
.g-query .items { padding-left: 7px; }
.g-ins { width: 193px; }
.g-ins .items { padding-left: 11px; }
.g-calc { width: 105px; }
.g-calc .items { padding-left: 7px; }
.g-conf { width: 125px; }
.g-conf .items { padding-left: 9px; }
.g-pub { width: 63px; }
.g-pub .items { padding-left: 4px; }
.rb { display: flex; flex-direction: column; align-items: center; white-space: nowrap; flex: none; padding-top: 2px; }
.rb > svg { margin-bottom: 3px; }
.rb > .nudge { margin-left: 4px; }
.rb > span { display: flex; align-items: center; gap: 2px; }
.cv { width: 8px; height: 8px; }
.off { color: #a19f9d; }
.colar { width: 54px; }
.w34 { width: 34px; } .w42 { width: 42px; } .w44 { width: 44px; } .w46 { width: 46px; } .w48 { width: 48px; } .w53 { width: 53px; } .w54 { width: 54px; } .w58 { width: 58px; } .w59 { width: 59px; } .w66 { width: 66px; } .w88 { width: 88px; } .w104 { width: 104px; } .w162 { width: 162px; }
.gap { margin-left: 3px; }
.cliplist { display: flex; flex-direction: column; padding-top: 1px; }
.cl { height: 24px; display: flex; align-items: center; gap: 3px; margin-left: -4px; white-space: nowrap; }
.fold { position: absolute; right: 4px; bottom: 5px; }

.work { flex: 1; display: flex; min-height: 0; }
.rail { width: 40px; border-right: 1px solid #d8d6d4; flex: none; }
.rail div { height: 40px; display: flex; align-items: center; justify-content: center; border-left: 2px solid transparent; padding-right: 2px; }
.rail .on { border-color: #f2c811; }
.center { width: 964px; flex: none; display: flex; flex-direction: column; border-right: 1px solid #d8d6d4; }
.upper { flex: 1; display: flex; background: #fff; min-height: 0; }
.stage { width: 930px; padding-left: 14px; flex: none; }
.page { position: relative; width: 902px; height: 505px; box-shadow: 0 0 11px rgba(0,0,0,.28); clip-path: inset(0 -14px 0 -14px); background: linear-gradient(#f4fdfe 0, #d9f1f5 30%, #bfe7ef 52%, #a9dfea 72%, #aee1eb 84%, #c6eaf2 99.200%, #8dd3df 99.400%, #8dd3df 99.700%, #c6eaf2 99.800%); }
.rule { position: absolute; left: 7px; top: 41px; width: 820px; height: 3px; background: #40b5ca; box-shadow: 1px 3px 3px rgba(70,90,95,.6); }
.logo { position: absolute; left: 835px; top: 8px; }
.visual { position: absolute; left: 5px; top: 30px; }
.ax text { font-size: 12px; font-weight: 700; fill: #7a7876; letter-spacing: 0; }
.ax .reg { font-weight: 400; fill: #000; }
.ax .leg { font-size: 11.500px; font-weight: 600; }
.ax .reg2 { font-weight: 400; }
.dl text { font-size: 8px; font-weight: 700; fill: #fff; letter-spacing: 0; }
.filters { width: 33px; border-left: 1px solid #c8c6c4; display: flex; flex-direction: column; align-items: center; padding-top: 15px; }
.fun { margin: 33px 0 12px 4px; }
.filters span { writing-mode: vertical-rl; font-size: 15.500px; font-weight: 600; letter-spacing: -.4px; }

.tabs { height: 36px; flex: none; display: flex; position: relative; overflow: hidden; white-space: nowrap; border-bottom: 1px solid #dddbd9; }
.arrows { width: 40px; flex: none; display: flex; align-items: center; padding-left: 5px; border-right: 1px solid #a19f9d; }
.tab { width: 66.500px; flex: none; display: flex; align-items: center; padding-left: 12px; gap: 3px; border-right: 1px solid #c8c6c4; }
.tab svg { width: 14px; height: 12px; margin-top: 5px; }
.tab.cur { width: 88px; padding: 4px 0 0; justify-content: center; font-weight: 600; letter-spacing: -.02em; background: #fff; border-bottom: 4px solid #f2c811; border-right: 0; }
.tab.wide { width: 73px; }
.tab.cut { border: 0; }
.plus { position: absolute; right: 0; top: 3px; width: 39px; height: 32px; background: #f2c811; display: flex; align-items: center; justify-content: center; }

.viz { width: 181px; flex: none; border-right: 1px solid #d8d6d4; overflow: hidden; }
.ph { height: 48px; display: flex; justify-content: space-between; align-items: center; padding: 0 11px 0 12px; font-size: 15.500px; letter-spacing: -.3px; color: #3b3a39; }
.ph b { font-weight: 600; margin-top: 2px; }
.ph svg { margin-bottom: 4px; }
.vgrid { display: grid; grid-template-columns: repeat(6, 28px); grid-auto-rows: 24px; height: 169px; border-bottom: 1px solid #d8d6d4; }
.vgrid i { display: flex; align-items: center; justify-content: center; font-style: normal; }
.vgrid svg { width: 18px; height: 18px; }
.vgrid .sel svg { outline: 2px solid #605e5c; background: #d2d0ce; }
.vgrid text { letter-spacing: 0; }
.k { fill: none; stroke: #3b3a39; stroke-width: 1.200; }
.w { fill: #fff; stroke: #3b3a39; stroke-width: 1.100; }
.g { fill: #c8c6c4; stroke: #797775; }
.b { fill: #83beec; stroke: #0b6fb8; stroke-width: 1.100; }
.bl { fill: none; stroke: #0b6fb8; stroke-width: 1.500; }
.or { fill: #f4b46c; stroke: #d9730d; }
.letter { color: #1f85c8; font-weight: 700; font-size: 15px; }
.vgrid .dots { color: #a4501a; font-size: 18px; letter-spacing: 1px; }
.vtabs { display: flex; height: 36px; padding-left: 12px; }
.vtabs span { width: 40px; display: flex; align-items: center; justify-content: center; }
.vtabs .act { border-bottom: 3px solid #f2c811; }
.search { display: flex; align-items: center; background: #fff; border: 1px solid #c8c6c4; border-radius: 2px; font-size: 13px; color: #484644; }
.search svg { width: 16px; height: 16px; }
.vs { width: 166px; height: 30px; margin: 3px 0 7px 4px; padding-left: 10px; gap: 9px; }
.fmtbody { position: relative; width: 174px; border-top: 1px solid #d8d6d4; }
.thumb { position: absolute; right: 0; top: 70px; width: 6px; height: 36px; border-radius: 3px; background: #d2d0ce; }
.sec { height: 205px; padding: 21px 0 0 17px; border-bottom: 1px solid #d8d6d4; }
.row { display: flex; align-items: center; gap: 12px; }
.lbl { height: 24px; }
.pct { width: 50px; height: 24px; background: #fff; border: 1px solid #b3b0ad; border-radius: 2px; display: flex; align-items: center; justify-content: space-between; padding: 0 8px 0 9px; letter-spacing: 0; }
.lbl.t { margin-top: 26px; height: 29px; }
.tog { padding-left: 9px; gap: 4px; height: 16px; }
.rev { color: #2b579a; padding: 33px 0 0 3px; letter-spacing: -.4px; }
.axis { height: 36px; border-bottom: 1px solid #d8d6d4; display: flex; align-items: center; padding-left: 7px; }
.ex { width: 78px; padding-left: 7px; }
.aa { width: 23px; }

.fields { flex: 1; }
.fs { width: 172px; height: 28px; margin: 0 0 5px 4px; padding-left: 7px; gap: 5px; border-color: #605e5c; }
.list { border-top: 1px solid #d8d6d4; padding-top: 10px; white-space: nowrap; color: #3b3a39; }
.f { height: 24px; display: flex; align-items: center; padding-left: 8px; }
.ar { width: 10px; height: 16px; color: #605e5c; }
.down { transform: rotate(90deg); }
.ic { position: relative; margin: 0 2px 0 1px; }
.ic svg { width: 20px; height: 20px; }
.ic .okb { position: absolute; width: 12px; height: 12px; left: 10px; top: 9px; }
.child { padding-left: 38px; gap: 22px; letter-spacing: -.4px; }
.status { height: 22px; flex: none; padding: 4px 0 0 4px; color: #484644; }

.taskbar { height: 40px; background: #101010; color: #fff; display: flex; }
.start { width: 48px; display: flex; align-items: center; justify-content: center; }
.tsearch { width: 344px; flex: none; background: #3f3f3f; border: 1px solid #686868; display: flex; align-items: center; padding-left: 10px; gap: 11px; font-size: 15px; letter-spacing: -.48px; color: #d8d6d4; }
.taskbar .t { width: 49px; display: flex; align-items: center; justify-content: center; flex: none; }
.taskbar .cort { width: 48px; }
.taskbar .ntv { width: 50px; padding-right: 3px; }
.run { background: linear-gradient(#aaa7ec, #aaa7ec) center bottom / 40px 2px no-repeat; }
.taskbar .pbi { background-color: #333; background-size: 100% 2px; }
.mail svg { margin-left: 8px; }
.tray { flex: 1; display: flex; align-items: center; margin-left: 136px; letter-spacing: -.3px; }
.snd { margin-left: 1px; }
.por { margin-left: 8px; width: 32px; }
.clock { display: flex; flex-direction: column; align-items: center; width: 65px; line-height: 18px; margin-right: 15px; letter-spacing: -.45px; }
.peek { width: 1px; height: 40px; background: #555; margin-left: 20px; }
.marks { position: absolute; left: 0; top: 0; pointer-events: none; }
```
